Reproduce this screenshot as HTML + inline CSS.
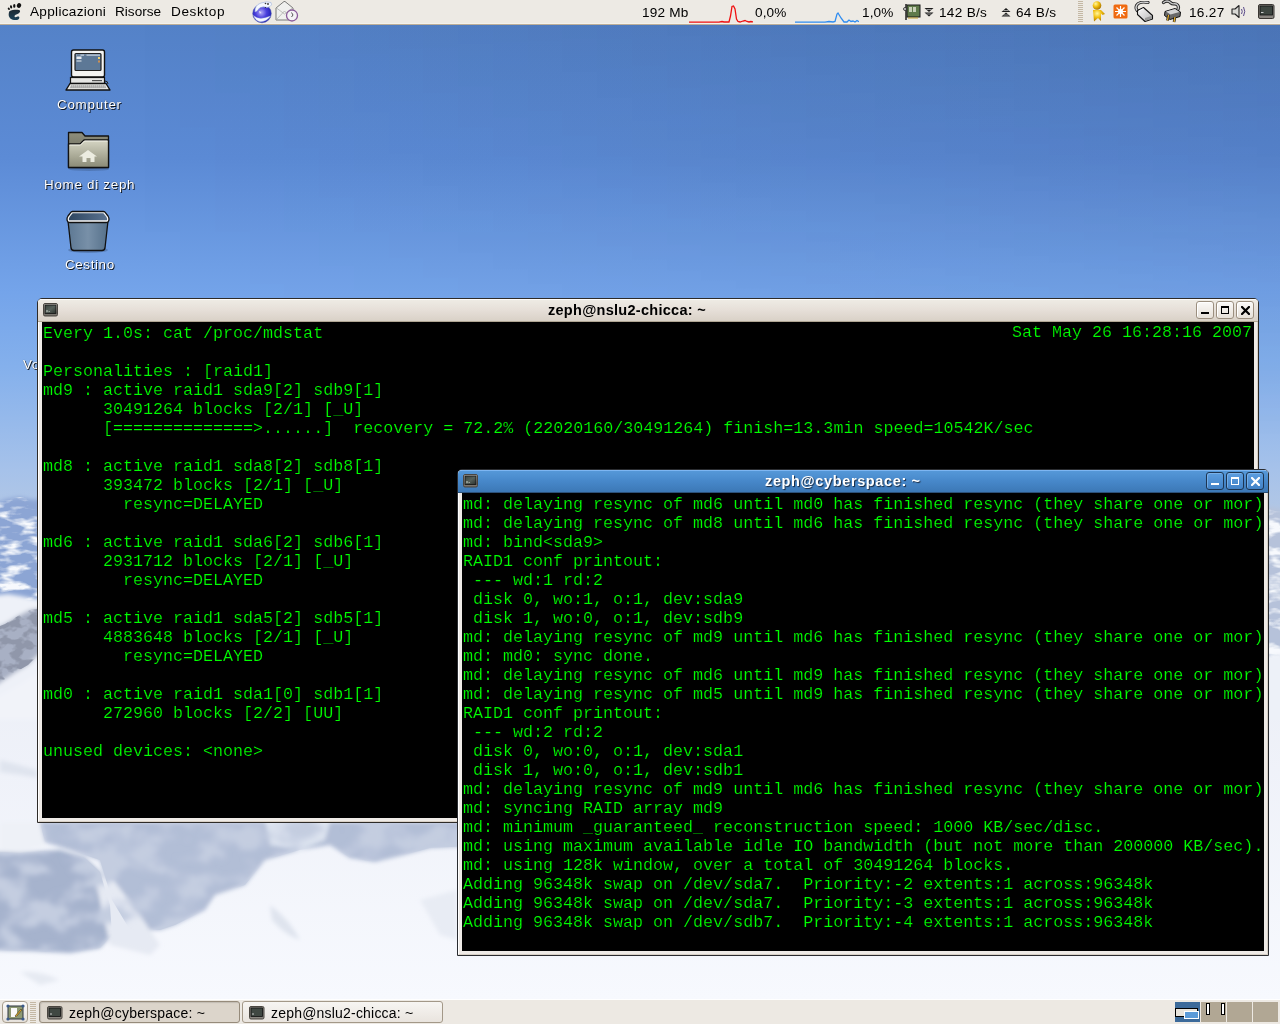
<!DOCTYPE html>
<html><head><meta charset="utf-8">
<style>
*{box-sizing:border-box}
body{-webkit-font-smoothing:antialiased}
.t,.lbl,.title,.tbtn div{will-change:transform}
html,body{margin:0;padding:0;width:1280px;height:1024px;overflow:hidden;font-family:"Liberation Sans",sans-serif;background:#6a98de}
.abs{position:absolute}
#bg{position:absolute;left:0;top:0}
#top{position:absolute;left:0;top:0;width:1280px;height:25px;background:#edeae4;border-bottom:1px solid #bcae98;box-shadow:inset 0 -1px 0 #f3f1ec}
#top .t{position:absolute;top:4px;font-size:13.6px;color:#000;white-space:nowrap;line-height:16px}
#bot{position:absolute;left:0;top:999px;width:1280px;height:25px;background:#ede9e3;border-top:1px solid #ffffff}
.win{position:absolute;border:1px solid #2e2b28;border-radius:5px 5px 0 0;overflow:hidden}
.frame{position:absolute;left:0;top:0;right:0;bottom:0;border:1px solid #fff;border-top:none;border-right-color:#d8d0c6;border-bottom-color:#d8d0c6;background:#efebe7}
.tb{position:absolute;left:0;top:0;right:0;height:23px}
.term{position:absolute;background:#000;color:#00ff00;-webkit-text-stroke:0.2px #000;font-family:"Liberation Mono",monospace;font-size:16.68px;line-height:19px;white-space:pre;overflow:hidden;padding:1.7px 0 0 1px}
.title{position:absolute;font-weight:bold;font-size:14.5px;white-space:nowrap;line-height:17px}
.btn{position:absolute;top:2px;width:18px;height:17px;border-radius:3px}
.lbl{position:absolute;color:#fff;font-size:13.4px;white-space:nowrap;text-shadow:1px 1px 0 rgba(0,0,0,0.85),0 0 1px rgba(0,0,0,0.5);line-height:16px}
.tbtn{position:absolute;top:1001px;height:22px;border:1px solid #9d9282;border-radius:3px;font-size:14px;line-height:20px;white-space:nowrap}
.ws{position:absolute;top:1002px;height:20px;width:25px;background:#b1a794}
</style></head><body>

<svg id="bg" width="1280" height="1024" viewBox="0 0 1280 1024">
<defs>
<linearGradient id="sky" x1="0" y1="24" x2="0" y2="520" gradientUnits="userSpaceOnUse">
<stop offset="0" stop-color="#5482c8"/>
<stop offset="0.27" stop-color="#5c8bd6"/>
<stop offset="0.54" stop-color="#74a4ea"/>
<stop offset="0.69" stop-color="#84b0ec"/>
<stop offset="0.90" stop-color="#a6c2ea"/>
<stop offset="1" stop-color="#b4c8e4"/>
</linearGradient>
<linearGradient id="skyR" x1="0" y1="0" x2="1280" y2="0" gradientUnits="userSpaceOnUse">
<stop offset="0.1" stop-color="#000" stop-opacity="0"/>
<stop offset="1" stop-color="#0a1840" stop-opacity="0.13"/>
</linearGradient>
<linearGradient id="skyRv" x1="0" y1="24" x2="0" y2="440" gradientUnits="userSpaceOnUse">
<stop offset="0" stop-color="#fff" stop-opacity="1"/>
<stop offset="1" stop-color="#fff" stop-opacity="0"/>
</linearGradient>
<mask id="mR"><rect width="1280" height="1024" fill="url(#skyRv)"/></mask>
<linearGradient id="snow" x1="0" y1="680" x2="0" y2="1000" gradientUnits="userSpaceOnUse">
<stop offset="0" stop-color="#eceff7"/>
<stop offset="1" stop-color="#f7f9fe"/>
</linearGradient>
<filter id="blur2" x="-5%" y="-5%" width="110%" height="110%"><feGaussianBlur stdDeviation="2.2"/></filter>
<filter id="nzW" x="0" y="0" width="100%" height="100%" filterUnits="objectBoundingBox">
 <feTurbulence type="fractalNoise" baseFrequency="0.045 0.11" numOctaves="3" seed="7"/>
 <feColorMatrix type="matrix" values="0 0 0 0 0.93  0 0 0 0 0.95  0 0 0 0 0.98  4 0 0 0 -1.9"/>
 <feGaussianBlur stdDeviation="0.5"/>
</filter>
<filter id="nzD" x="0" y="0" width="100%" height="100%" filterUnits="objectBoundingBox">
 <feTurbulence type="fractalNoise" baseFrequency="0.07 0.1" numOctaves="3" seed="11"/>
 <feColorMatrix type="matrix" values="0 0 0 0 0.28  0 0 0 0 0.31  0 0 0 0 0.40  6 0 0 0 -2.6"/>
 <feGaussianBlur stdDeviation="0.5"/>
</filter>
<filter id="nzI" x="0" y="0" width="100%" height="100%" filterUnits="objectBoundingBox">
 <feTurbulence type="fractalNoise" baseFrequency="0.025 0.04" numOctaves="4" seed="5"/>
 <feColorMatrix type="matrix" values="0 0 0 0 0.55  0 0 0 0 0.61  0 0 0 0 0.75  5 0 0 0 -2.2"/>
 <feGaussianBlur stdDeviation="1"/>
</filter>
<clipPath id="cDist"><path d="M-10,505 L6,499 L20,497 L34,500 L50,496 L50,600 L-10,600 Z M1250,512 L1262,507 L1276,508 L1290,512 L1290,665 L1250,665 Z"/></clipPath>
<clipPath id="cRock"><path d="M-10,630 L5,624 L18,616 L30,610 L50,606 L50,650 L38,655 L28,665 L16,672 L4,680 L-10,690 Z"/></clipPath>
<clipPath id="cIce"><path d="M-10,852 L20,853 L60,850 L85,858 L100,872 L110,905 L112,935 L100,948 L70,953 L30,951 L-10,950 Z M40,822 L470,822 L470,846 L430,848 L400,856 L375,862 L350,858 L330,845 L300,850 L265,860 L245,885 L215,895 L205,910 L175,925 L160,930 L130,930 L112,900 L100,860 L70,850 L45,842 Z"/></clipPath>
</defs>
<rect width="1280" height="1024" fill="url(#sky)"/>
<rect width="1280" height="1024" fill="url(#skyR)" mask="url(#mR)"/>
<rect x="0" y="680" width="1280" height="344" fill="url(#snow)"/>
<!-- distant mountains -->
<g filter="url(#blur2)">
<polygon points="-10,505 6,499 20,497 34,500 50,496 50,600 -10,600" fill="#8ca5d4"/>
<polygon points="1250,512 1262,507 1276,508 1290,512 1290,665 1250,665" fill="#b6c2da"/>
</g>
<g clip-path="url(#cDist)"><rect x="-10" y="490" width="60" height="115" filter="url(#nzW)"/><rect x="1250" y="500" width="40" height="170" filter="url(#nzW)"/></g>
<!-- left peak -->
<g filter="url(#blur2)">
<polygon points="-10,596 8,594 20,596 34,599 50,601 50,720 -10,720" fill="#eef1f8"/>
<path d="M-10,630 L5,624 L18,616 L30,610 L50,606 L50,650 L38,655 L28,665 L16,672 L4,680 L-10,690 Z" fill="#a8b0c4"/>
<path d="M-10,700 L20,684 L50,664 L50,720 L-10,720 Z" fill="#f1f3f9"/>
<path d="M0,760 Q20,765 37,770 L37,778 Q18,774 0,772 Z" fill="#dfe4ee"/>
<polygon points="1250,660 1290,652 1290,720 1250,720" fill="#edf1f8"/>
</g>
<g clip-path="url(#cRock)"><rect x="-10" y="600" width="60" height="95" filter="url(#nzD)"/></g>
<!-- ice below window 1 -->
<g filter="url(#blur2)">
<path d="M-10,852 L20,853 L60,850 L85,858 L100,872 L110,905 L112,935 L100,948 L70,953 L30,951 L-10,950 Z" fill="#a6b3cd"/>
<path d="M40,822 L470,822 L470,846 L430,848 L400,856 L375,862 L350,858 L330,845 L300,850 L265,860 L245,885 L215,895 L205,910 L175,925 L160,930 L130,930 L112,900 L100,860 L70,850 L45,842 Z" fill="#b2bed6"/>
<path d="M95,880 L112,878 L140,915 L160,945 L150,955 L110,945 Z" fill="#e6eaf3"/>
<path d="M265,822 L330,822 L325,840 L300,850 L270,845 Z" fill="#dce3ef"/>
<path d="M0,822 L40,822 L45,845 L20,852 L0,852 Z" fill="#eef1f7"/>
</g>
<g clip-path="url(#cIce)" filter="url(#blur2)"><rect x="-10" y="815" width="480" height="145" filter="url(#nzI)"/></g>
<g filter="url(#blur2)">
<path d="M270,905 Q290,920 300,940 Q285,935 272,920 Z" fill="#dfe4ee"/>
<path d="M420,900 L457,890 L457,940 L440,935 Z" fill="#e8ecf4"/>
<path d="M20,972 Q40,970 60,980 L40,985 Z" fill="#e6eaf2"/>
</g>
</svg>

<div class="lbl" style="left:23px;top:357px;letter-spacing:0.5px">Vo</div>

<!-- desktop icons -->
<div id="icons">
<svg class="abs" style="left:64px;top:48px" width="50" height="45" viewBox="0 0 50 45">
<rect x="7.5" y="2" width="33" height="27" rx="2" fill="#f4f4f2" stroke="#111" stroke-width="1.4"/>
<rect x="11" y="5.5" width="26" height="17" rx="1" fill="#5d7896" stroke="#222" stroke-width="1.2"/>
<rect x="12" y="6.5" width="24" height="1.2" fill="#cfd8e2"/><rect x="12.5" y="6.5" width="4" height="1.2" fill="#4a6482"/><rect x="20" y="6.5" width="2.5" height="1.2" fill="#4a6482"/>
<rect x="12.5" y="8.5" width="5" height="2.5" fill="#e8ecf0"/>
<rect x="12.5" y="12.5" width="5" height="1" fill="#e8ecf0"/>
<rect x="34" y="9" width="2" height="2" fill="#f0d070"/><rect x="34" y="12.5" width="2" height="2" fill="#d09050"/>
<rect x="6.5" y="29.5" width="34" height="6" fill="#e6e6e4" stroke="#111" stroke-width="1.2"/>
<rect x="28" y="32" width="10" height="1.2" fill="#555"/>
<path d="M6,35.5 L42,35.5 L46,42 L2,42 Z" fill="#e8e8e6" stroke="#111" stroke-width="1.4" stroke-linejoin="round"/>
<path d="M7,37.2 L41,37.2 L42.5,40.2 L5.5,40.2 Z" fill="#c4c4c2"/><path d="M7,38 L41.5,38 M6.5,39.3 L42,39.3" stroke="#8a8a88" stroke-width="0.7" stroke-dasharray="1.2 0.8"/>
<path d="M41,33 q3,0 3,3" stroke="#222" fill="none" stroke-width="1"/>
</svg>
<div class="lbl" style="left:57px;top:97px;letter-spacing:0.75px">Computer</div>

<svg class="abs" style="left:66px;top:130px" width="46" height="42" viewBox="0 0 46 42">
<defs><linearGradient id="fg" x1="0" y1="0" x2="0" y2="1"><stop offset="0" stop-color="#d6d6c4"/><stop offset="1" stop-color="#8a8a76"/></linearGradient>
<linearGradient id="fg2" x1="0" y1="0" x2="0" y2="1"><stop offset="0" stop-color="#8e8e7c"/><stop offset="1" stop-color="#5e5e50"/></linearGradient></defs>
<path d="M2.5,2.5 L16,2.5 L19,6 L42.5,6 L42.5,37.5 L2.5,37.5 Z" fill="url(#fg2)" stroke="#111" stroke-width="1.3" stroke-linejoin="round"/>
<path d="M2.5,14 L14,14 L18,10 L42.5,10 L42.5,37.5 L2.5,37.5 Z" fill="url(#fg)" stroke="#111" stroke-width="1.3" stroke-linejoin="round"/>
<path d="M3.5,15 L14.5,15 L18.5,11 L41.5,11" stroke="#f4f4ea" stroke-width="1" fill="none"/>
<path d="M22,20 L31,26.5 L28.5,26.5 L28.5,32 L24.5,32 L24.5,28 L20.5,28 L20.5,32 L16.5,32 L16.5,26.5 L13,26.5 Z" fill="#ecece0"/>
<ellipse cx="23" cy="39.5" rx="20" ry="1.5" fill="#000" opacity="0.15"/>
</svg>
<div class="lbl" style="left:44px;top:177px;letter-spacing:0.72px">Home di zeph</div>

<svg class="abs" style="left:64px;top:209px" width="48" height="46" viewBox="0 0 48 46">
<defs><linearGradient id="trg" x1="0" y1="0" x2="1" y2="0"><stop offset="0" stop-color="#5d7893"/><stop offset="0.5" stop-color="#7890a8"/><stop offset="1" stop-color="#55708a"/></linearGradient>
<linearGradient id="tri" x1="0" y1="0" x2="1" y2="0"><stop offset="0" stop-color="#2e4660"/><stop offset="1" stop-color="#5a7290"/></linearGradient></defs>
<ellipse cx="24" cy="41" rx="20" ry="3" fill="#000" opacity="0.18"/>
<path d="M4,12 L7,39 Q7.5,41.5 10,41.5 L38,41.5 Q40.5,41.5 41,39 L44,12 Z" fill="url(#trg)" stroke="#111" stroke-width="1.3"/>
<path d="M3,10 Q3,8.5 4,7 L7,3.2 Q7.6,2.5 8.6,2.5 L39.4,2.5 Q40.4,2.5 41,3.2 L44,7 Q45,8.5 45,10 Q45,13.5 42,13.5 L6,13.5 Q3,13.5 3,10 Z" fill="#f6f6f6" stroke="#111" stroke-width="1.3"/>
<path d="M5,11.3 Q4.6,9.5 5.6,8 L8.6,4.2 L39.4,4.2 L42.4,8 Q43.4,9.5 43,11.3 Z" fill="url(#tri)"/>
</svg>
<div class="lbl" style="left:65px;top:257px;letter-spacing:0.62px">Cestino</div>
</div>

<div id="top">
<svg class="abs" style="left:6px;top:2px" width="18" height="20" viewBox="0 0 18 20">
<defs><linearGradient id="ftg" x1="0" y1="0" x2="0" y2="1"><stop offset="0" stop-color="#1e2a32"/><stop offset="1" stop-color="#1c4258"/></linearGradient></defs>
<path d="M3.4,9.2 C6,8 10,7.5 13,8 C14.8,8.5 14.3,10.5 12.5,11.5 C10.5,12.5 8.3,13 8.5,14.6 C8.7,15.6 10,15.4 11,14.8 C12,14.2 13.6,14.5 13.3,15.9 C13,17.6 10.5,18.3 8,18 C4.5,17.5 2.4,15 2.7,12 C2.8,10.8 3,9.8 3.4,9.2 Z" fill="url(#ftg)"/>
<ellipse cx="2.8" cy="6.8" rx="0.95" ry="1.35" transform="rotate(-30 2.8 6.8)" fill="#111"/>
<ellipse cx="5.1" cy="4.9" rx="1.05" ry="1.65" transform="rotate(-15 5.1 4.9)" fill="#111"/>
<ellipse cx="8.3" cy="3.9" rx="1.15" ry="1.85" fill="#111"/>
<ellipse cx="13" cy="3.5" rx="2.1" ry="2.5" transform="rotate(35 13 3.5)" fill="#111"/>
</svg>
<div class="t" style="left:30px;letter-spacing:0.3px">Applicazioni</div>
<div class="t" style="left:115px">Risorse</div>
<div class="t" style="left:171px;letter-spacing:0.6px">Desktop</div>

<svg class="abs" style="left:250px;top:0px" width="24" height="24" viewBox="0 0 24 24">
<defs><radialGradient id="glb" cx="0.45" cy="0.45" r="0.6"><stop offset="0" stop-color="#b0a8f8"/><stop offset="0.5" stop-color="#4a40dc"/><stop offset="1" stop-color="#1c1cb0"/></radialGradient></defs>
<circle cx="12" cy="13.5" r="9.3" fill="url(#glb)" stroke="#3a4aa0" stroke-width="0.5"/>
<path d="M3.5,15.5 Q9,21 20.5,16 Q16,22.5 9,21.5 Q5,20 3.5,15.5 Z" fill="#f4f8ff" stroke="#a8b8e0" stroke-width="0.4"/>
<path d="M5,12 Q4.5,5 11,3 Q17,1 21,2.5 Q22.5,5 20,6.5 Q17,8 15,7 Q10,6 7,11 Z" fill="#f4f8ff" stroke="#98acd8" stroke-width="0.6"/>
<circle cx="18" cy="4" r="0.9" fill="#333"/><circle cx="15.5" cy="3.5" r="0.8" fill="#333"/><circle cx="15.5" cy="7.5" r="0.6" fill="#333"/>
<path d="M9,11 L11,12 L10,14 Z" fill="#fff" opacity="0.8"/>
</svg>
<svg class="abs" style="left:275px;top:0px" width="24" height="23" viewBox="0 0 24 23">
<path d="M1,8 L9,1.5 L10,1.5 L18,8 L18,20 L1,20 Z" fill="#f0f0ee" stroke="#7a7a78" stroke-width="1"/>
<path d="M1.5,19.5 L9.5,11 L17.5,19.5 M1.5,8 L9.5,14 L17.5,8" stroke="#b0b0ae" stroke-width="0.8" fill="none"/>
<circle cx="17" cy="15.5" r="5.5" fill="#f4f2f4" stroke="#8a5a9a" stroke-width="1.3"/>
<path d="M16.5,12.5 L18,15 L16.5,17" stroke="#444" stroke-width="0.9" fill="none"/>
</svg>

<div class="t" style="top:5px;left:642px;letter-spacing:0.2px">192 Mb</div>
<svg class="abs" style="left:689px;top:3.5px" width="64" height="20" viewBox="0 0 64 20">
<path d="M0,18.2 L30,18.2 L33,17.5 L35,18 L40,18 L41.5,12 L43,2.5 L44.5,2 L46,5 L47.5,15 L49,17.5 L51,18 L54,17 L56,16.5 L58,17.5 L60,18 L62,17.5 L64,17.8" stroke="#f01010" stroke-width="1.3" fill="none"/>
</svg>
<div class="t" style="top:5px;left:755px;letter-spacing:0.1px">0,0%</div>
<svg class="abs" style="left:795px;top:3.5px" width="64" height="20" viewBox="0 0 64 20">
<path d="M0,18.2 L30,18.2 L34,17.5 L38,18 L40,17.5 L42,10 L43,9 L46,14 L49,18 L52,18 L54,16 L56,17.5 L58,17 L60,18 L62,16.5 L64,17.8" stroke="#2f8cf0" stroke-width="1.3" fill="none"/>
</svg>
<div class="t" style="top:5px;left:862px;letter-spacing:0.1px">1,0%</div>

<svg class="abs" style="left:903px;top:3px" width="18" height="18" viewBox="0 0 18 18">
<rect x="4" y="2" width="13" height="12" fill="#5f7a4a" stroke="#1a1a1a" stroke-width="1"/>
<rect x="6" y="4" width="3" height="5" fill="#c8d0b8"/><rect x="10" y="4" width="3" height="5" fill="#c8d0b8"/>
<path d="M6,14 L6,16 M8,14 L8,16 M10,14 L10,16 M12,14 L12,16 M14,14 L14,16" stroke="#c0a030" stroke-width="1"/>
<path d="M3,1 L3,17" stroke="#222" stroke-width="1.5"/><circle cx="2" cy="6" r="1.5" fill="#ddd" stroke="#222" stroke-width="0.8"/>
</svg>
<svg class="abs" style="left:924px;top:7px" width="10" height="11" viewBox="0 0 10 11">
<path d="M0.5,1 L9.5,1 L5,5 Z M0.5,5.5 L9.5,5.5 L5,9.5 Z" fill="#1a1a1a"/><path d="M2.5,2.5 L7.5,2.5 M2.5,7 L7.5,7" stroke="#eee" stroke-width="0.6"/>
</svg>
<div class="t" style="top:5px;left:939px;letter-spacing:0.3px">142 B/s</div>
<svg class="abs" style="left:1001px;top:7px" width="10" height="11" viewBox="0 0 10 11">
<path d="M0.5,5 L9.5,5 L5,1 Z M0.5,9.5 L9.5,9.5 L5,5.5 Z" fill="#1a1a1a"/><path d="M2.5,3.5 L7.5,3.5 M2.5,8 L7.5,8" stroke="#eee" stroke-width="0.6"/>
</svg>
<div class="t" style="top:5px;left:1016px;letter-spacing:0.3px">64 B/s</div>

<div class="abs" style="left:1078px;top:1px;width:5px;height:22px;background:repeating-linear-gradient(#c4b8a4 0px,#c4b8a4 1px,transparent 1px,transparent 2px)"></div>

<svg class="abs" style="left:1090px;top:0px" width="18" height="24" viewBox="0 0 18 24">
<defs><radialGradient id="yp" cx="0.35" cy="0.3" r="0.7"><stop offset="0" stop-color="#fff6a0"/><stop offset="0.5" stop-color="#f2c010"/><stop offset="1" stop-color="#b07a00"/></radialGradient></defs>
<circle cx="7" cy="5.5" r="4.3" fill="url(#yp)"/>
<path d="M3,10 L11,10 L15,14 L12.5,15 L11,13.5 L11,21 L8,18 L4,21.5 Z" fill="url(#yp)"/>
</svg>
<svg class="abs" style="left:1113px;top:4px" width="16" height="16" viewBox="0 0 16 16">
<rect x="0.5" y="0.5" width="14" height="14" rx="1.5" fill="#f06a10"/>
<path d="M7.5,2 L7.5,13 M2,7.5 L13,7.5 M3.5,3.5 L11.5,11.5 M11.5,3.5 L3.5,11.5" stroke="#fff" stroke-width="1.2"/>
<circle cx="7.5" cy="7.5" r="2.5" fill="#fff"/>
</svg>
<svg class="abs" style="left:1134px;top:1px" width="20" height="22" viewBox="0 0 20 22">
<defs><linearGradient id="mg" x1="0" y1="0" x2="1" y2="1"><stop offset="0" stop-color="#fafafa"/><stop offset="1" stop-color="#b8b8b8"/></linearGradient></defs>
<path d="M14,1.5 C9,0.5 4,1.5 2.5,4.5 C1.5,7 2.5,9.5 4.5,10.5" stroke="#222" stroke-width="3.2" fill="none" stroke-linecap="round"/>
<path d="M14,1.5 C9,0.5 4,1.5 2.5,4.5 C1.5,7 2.5,9.5 4.5,10.5" stroke="#d8d8d8" stroke-width="1.4" fill="none" stroke-linecap="round"/>
<path d="M3.5,9.5 L9.5,6.5 L18.5,14.5 L18.5,18 L11,20.5 L3.5,13.5 Z" fill="url(#mg)" stroke="#111" stroke-width="1.1" stroke-linejoin="round"/>
<path d="M11,20 L18,17.7 L18,14.8 L11,17 Z" fill="#9a9a9a"/>
<path d="M5,10 L9.5,7.5" stroke="#fff" stroke-width="0.8"/>
</svg>
<svg class="abs" style="left:1161px;top:0px" width="21" height="23" viewBox="0 0 21 23">
<path d="M2.5,2.5 C5,0.5 8,1 10,3 C12,5 14.5,2.5 16.5,5 C18,7 17.5,9 16,10.5" stroke="#222" stroke-width="3.2" fill="none" stroke-linecap="round"/>
<path d="M2.5,2.5 C5,0.5 8,1 10,3 C12,5 14.5,2.5 16.5,5 C18,7 17.5,9 16,10.5" stroke="#c8c8c8" stroke-width="1.4" fill="none" stroke-linecap="round"/>
<path d="M4,11.5 L14,8.5 L19.5,12 L19,16.5 L9,19.5 L3.5,15.5 Z" fill="#6a6a6a" stroke="#111" stroke-width="1" stroke-linejoin="round"/>
<path d="M5,11.5 L14,9 L18.5,12 L9.5,14.5 Z" fill="#d4d4d4"/>
<path d="M7.5,15 L6.5,20.5 M14,17 L13,22" stroke="#111" stroke-width="2.6"/>
<path d="M7.5,15 L6.5,20.5 M14,17 L13,22" stroke="#e8b030" stroke-width="1.3"/>
</svg>
<div class="t" style="top:5px;left:1189px;letter-spacing:0.3px">16.27</div>
<svg class="abs" style="left:1231px;top:4px" width="17" height="16" viewBox="0 0 17 16">
<path d="M1,5 L4,5 L8,1.5 L8,13.5 L4,10 L1,10 Z" fill="#d8d8d4" stroke="#222" stroke-width="1.1" stroke-linejoin="round"/>
<path d="M10.5,5 Q12,7.5 10.5,10 M12.5,3 Q15,7.5 12.5,12" stroke="#5a4a8a" stroke-width="1" fill="none"/>
</svg>
<svg class="abs" style="left:1258px;top:4px" width="17" height="16" viewBox="0 0 17 16">
<rect x="0.5" y="0.5" width="15.5" height="14" rx="1.5" fill="#8a8680" stroke="#3a3632" stroke-width="1"/>
<rect x="2" y="2" width="12.5" height="9" fill="#3e4640" stroke="#111" stroke-width="0.8"/>
<rect x="3" y="8" width="2.5" height="1" fill="#ccc"/>
</svg>
</div>
<div id="bot">
<div class="abs" style="left:2px;top:1px;width:26px;height:22px;border:1px solid #a89e8e;border-radius:4px;background:linear-gradient(#fbfaf8,#e6e1da)">
<svg class="abs" style="left:3px;top:2px" width="19" height="17" viewBox="0 0 19 17">
<rect x="2" y="2" width="15" height="13" fill="#8e9a74" stroke="#2c3440" stroke-width="1"/>
<path d="M5,4 L11,4 L11,13 L5,13 Z" fill="#fafafa"/>
<path d="M9,12 L15,5 L16,6 L10,13 Z" fill="#e8b020" stroke="#333" stroke-width="0.6"/>
<circle cx="2" cy="2" r="1.6" fill="#3a5a8a"/><circle cx="17" cy="2" r="1.6" fill="#3a5a8a"/><circle cx="2" cy="15" r="1.6" fill="#3a5a8a"/><circle cx="17" cy="15" r="1.6" fill="#3a5a8a"/>
</svg></div>
<div class="abs" style="left:30px;top:2px;width:6px;height:21px;background:repeating-linear-gradient(#c4b8a4 0px,#c4b8a4 1px,transparent 1px,transparent 2px)"></div>
</div>

<!-- window 1 -->
<div class="win" style="left:37px;top:298px;width:1222px;height:525px">
 <div class="frame"></div>
 <div class="tb" style="background:linear-gradient(#fdfcfb 0px,#fdfcfb 1px,#eeebe4 1px,#e6dfd8 11px,#d9d1c7 22px,#b0a694 22px)">
  <svg class="abs" style="left:5px;top:4px" width="15" height="14" viewBox="0 0 15 14">
<defs><linearGradient id="tga" x1="0" y1="0" x2="0" y2="1"><stop offset="0" stop-color="#c9c5be"/><stop offset="1" stop-color="#6e6a64"/></linearGradient>
<linearGradient id="tsa" x1="0" y1="0" x2="1" y2="1"><stop offset="0" stop-color="#3a423c"/><stop offset="0.5" stop-color="#56605a"/><stop offset="1" stop-color="#2a302c"/></linearGradient></defs>
<rect x="0.5" y="0.5" width="14" height="12.5" rx="1.5" fill="url(#tga)" stroke="#4a4640" stroke-width="1"/>
<rect x="2" y="2" width="11" height="8.5" fill="url(#tsa)" stroke="#111" stroke-width="0.8"/>
<rect x="3" y="7.5" width="2" height="1" fill="#c8d0c8"/><rect x="5.5" y="8" width="1.5" height="0.8" fill="#a8b0a8"/>
</svg>
  <div class="title" style="left:510px;top:3px;color:#000;letter-spacing:0.28px">zeph@nslu2-chicca: ~</div>
  <div class="btn" style="left:1158px;width:18px;height:18px;border:1px solid #9b8f7f;background:linear-gradient(#fbfaf8,#e6e0d8);box-shadow:inset 1px 1px 0 #fff"><div class="abs" style="left:4px;top:10px;width:8px;height:2px;background:#000"></div></div>
<div class="btn" style="left:1178px;width:18px;height:18px;border:1px solid #9b8f7f;background:linear-gradient(#fbfaf8,#e6e0d8);box-shadow:inset 1px 1px 0 #fff"><div class="abs" style="left:4px;top:4px;width:8px;height:8px;border:1.5px solid #000;border-top-width:2px"></div></div>
<div class="btn" style="left:1198px;width:18px;height:18px;border:1px solid #9b8f7f;background:linear-gradient(#fbfaf8,#e6e0d8);box-shadow:inset 1px 1px 0 #fff"><svg class="abs" style="left:4px;top:4px" width="9" height="9" viewBox="0 0 9 9"><path d="M1,1 L8,8 M8,1 L1,8" stroke="#000" stroke-width="2.2" stroke-linecap="square"/></svg></div>
 </div>
 <div class="term" style="left:4px;top:23px;width:1212px;height:496px">Every 1.0s: cat /proc/mdstat

Personalities : [raid1]
md9 : active raid1 sda9[2] sdb9[1]
      30491264 blocks [2/1] [_U]
      [==============&gt;......]  recovery = 72.2% (22020160/30491264) finish=13.3min speed=10542K/sec

md8 : active raid1 sda8[2] sdb8[1]
      393472 blocks [2/1] [_U]
        resync=DELAYED

md6 : active raid1 sda6[2] sdb6[1]
      2931712 blocks [2/1] [_U]
        resync=DELAYED

md5 : active raid1 sda5[2] sdb5[1]
      4883648 blocks [2/1] [_U]
        resync=DELAYED

md0 : active raid1 sda1[0] sdb1[1]
      272960 blocks [2/2] [UU]

unused devices: &lt;none&gt;</div>
 <div class="term" style="left:974px;top:23px;width:242px;height:20px;padding:1px 0 0 0">Sat May 26 16:28:16 2007</div>
</div>

<!-- window 2 -->
<div class="win" style="left:457px;top:469px;width:812px;height:487px;border-color:#2a2c30">
 <div class="frame"></div>
 <div class="tb" style="background:linear-gradient(#7db6f2 0px,#7db6f2 1px,#5598d8 1px,#4788ca 11px,#3c78b6 22px,#2c5078 22px)">
  <svg class="abs" style="left:5px;top:4px" width="15" height="14" viewBox="0 0 15 14">
<defs><linearGradient id="tgb" x1="0" y1="0" x2="0" y2="1"><stop offset="0" stop-color="#c9c5be"/><stop offset="1" stop-color="#6e6a64"/></linearGradient>
<linearGradient id="tsb" x1="0" y1="0" x2="1" y2="1"><stop offset="0" stop-color="#3a423c"/><stop offset="0.5" stop-color="#56605a"/><stop offset="1" stop-color="#2a302c"/></linearGradient></defs>
<rect x="0.5" y="0.5" width="14" height="12.5" rx="1.5" fill="url(#tgb)" stroke="#4a4640" stroke-width="1"/>
<rect x="2" y="2" width="11" height="8.5" fill="url(#tsb)" stroke="#111" stroke-width="0.8"/>
<rect x="3" y="7.5" width="2" height="1" fill="#c8d0c8"/><rect x="5.5" y="8" width="1.5" height="0.8" fill="#a8b0a8"/>
</svg>
  <div class="title" style="left:307px;top:3px;color:#fff;letter-spacing:0.63px;text-shadow:1px 1px 1px #1a2a40">zeph@cyberspace: ~</div>
  <div class="btn" style="left:748px;width:18px;height:18px;border:1px solid #1d3552;background:linear-gradient(#5c9ee0,#4282c6);box-shadow:inset 1px 1px 0 rgba(140,190,240,0.6)"><div class="abs" style="left:4px;top:10px;width:8px;height:2px;background:#fff"></div></div>
<div class="btn" style="left:768px;width:18px;height:18px;border:1px solid #1d3552;background:linear-gradient(#5c9ee0,#4282c6);box-shadow:inset 1px 1px 0 rgba(140,190,240,0.6)"><div class="abs" style="left:4px;top:4px;width:8px;height:8px;border:1.5px solid #fff;border-top-width:2px"></div></div>
<div class="btn" style="left:788px;width:18px;height:18px;border:1px solid #1d3552;background:linear-gradient(#5c9ee0,#4282c6);box-shadow:inset 1px 1px 0 rgba(140,190,240,0.6)"><svg class="abs" style="left:4px;top:4px" width="9" height="9" viewBox="0 0 9 9"><path d="M1,1 L8,8 M8,1 L1,8" stroke="#fff" stroke-width="2.2" stroke-linecap="square"/></svg></div>
 </div>
 <div class="term" style="left:4px;top:23px;width:802px;height:458px">md: delaying resync of md6 until md0 has finished resync (they share one or mor)
md: delaying resync of md8 until md6 has finished resync (they share one or mor)
md: bind&lt;sda9&gt;
RAID1 conf printout:
 --- wd:1 rd:2
 disk 0, wo:1, o:1, dev:sda9
 disk 1, wo:0, o:1, dev:sdb9
md: delaying resync of md9 until md6 has finished resync (they share one or mor)
md: md0: sync done.
md: delaying resync of md6 until md9 has finished resync (they share one or mor)
md: delaying resync of md5 until md9 has finished resync (they share one or mor)
RAID1 conf printout:
 --- wd:2 rd:2
 disk 0, wo:0, o:1, dev:sda1
 disk 1, wo:0, o:1, dev:sdb1
md: delaying resync of md9 until md6 has finished resync (they share one or mor)
md: syncing RAID array md9
md: minimum _guaranteed_ reconstruction speed: 1000 KB/sec/disc.
md: using maximum available idle IO bandwidth (but not more than 200000 KB/sec).
md: using 128k window, over a total of 30491264 blocks.
Adding 96348k swap on /dev/sda7.  Priority:-2 extents:1 across:96348k
Adding 96348k swap on /dev/sda7.  Priority:-3 extents:1 across:96348k
Adding 96348k swap on /dev/sdb7.  Priority:-4 extents:1 across:96348k</div>
</div>


<div class="tbtn" style="left:39px;width:201px;background:#dcd5cb;border-color:#968b7b;box-shadow:inset 1px 1px 1px rgba(0,0,0,0.12)">
 <svg class="abs" style="left:7px;top:4px" width="16" height="14" viewBox="0 0 16 14"><rect x="0.5" y="0.5" width="14.5" height="12.5" rx="1.5" fill="#8a8680" stroke="#4a4640"/><rect x="2" y="2" width="11.5" height="8.5" fill="#404842" stroke="#111" stroke-width="0.8"/><rect x="3" y="7.5" width="2" height="1" fill="#ccc"/></svg>
 <div class="abs" style="left:29px;top:1px;letter-spacing:0.23px">zeph@cyberspace: ~</div>
</div>
<div class="tbtn" style="left:242px;width:201px;background:linear-gradient(#f7f5f2,#e9e4de);border-color:#a39888">
 <svg class="abs" style="left:6px;top:4px" width="16" height="14" viewBox="0 0 16 14"><rect x="0.5" y="0.5" width="14.5" height="12.5" rx="1.5" fill="#8a8680" stroke="#4a4640"/><rect x="2" y="2" width="11.5" height="8.5" fill="#404842" stroke="#111" stroke-width="0.8"/><rect x="3" y="7.5" width="2" height="1" fill="#ccc"/></svg>
 <div class="abs" style="left:28px;top:1px;letter-spacing:0.2px">zeph@nslu2-chicca: ~</div>
</div>
<div class="ws" style="left:1175px;background:#3c6a9a"></div>
<div class="abs" style="left:1175px;top:1008px;width:23px;height:9px;background:#e8e4dc;border:1.5px solid #000"></div>
<div class="abs" style="left:1184px;top:1011px;width:15px;height:8px;background:#5a9ad8;border:1px solid #fff"></div>
<div class="ws" style="left:1201px"></div>
<div class="abs" style="left:1206px;top:1003px;width:4px;height:12px;background:#fff;border:1px solid #000"></div>
<div class="abs" style="left:1221px;top:1003px;width:4px;height:12px;background:#fff;border:1px solid #000"></div>
<div class="ws" style="left:1227px"></div>
<div class="ws" style="left:1253px"></div>
</body></html>
